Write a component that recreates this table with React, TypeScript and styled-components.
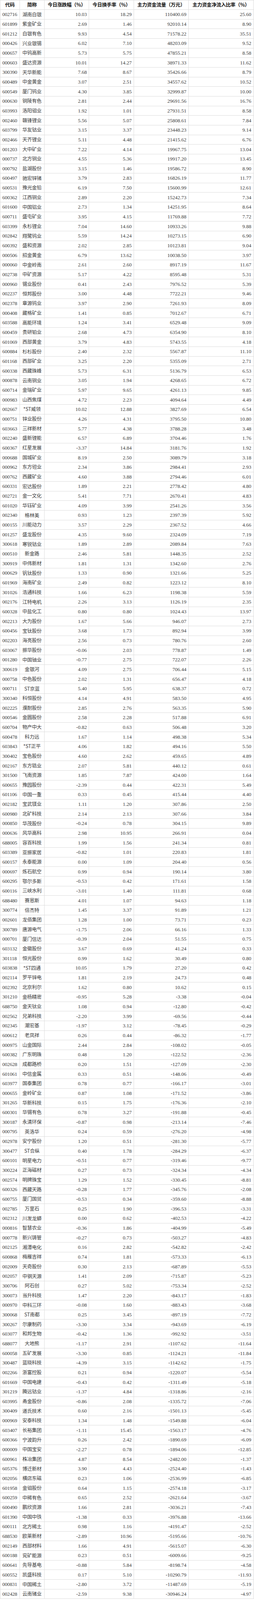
import React from 'react';
import styled, { createGlobalStyle } from 'styled-components';

const GlobalStyle = createGlobalStyle`
  html, body {
    margin: 0;
    padding: 0;
    background: #fff;
  }
`;

const RAW = `
002716 湖南白银 10.03 18.29 110400.69 25.60
601899 紫金矿业 2.69 1.46 92010.14 8.90
601212 白银有色 9.93 4.54 71578.22 35.51
000426 兴业银锡 6.02 7.10 48203.09 9.52
000657 中钨高新 5.73 5.75 47855.21 8.58
000603 盛达资源 10.01 14.27 38971.33 11.62
300390 天华新能 7.68 8.67 35426.66 8.79
600489 中金黄金 3.07 2.51 34557.62 10.52
600549 厦门钨业 4.30 3.85 32999.87 10.00
000630 铜陵有色 2.81 2.44 29691.56 16.76
603993 洛阳钼业 1.92 1.01 27931.51 8.58
002460 赣锋锂业 5.56 5.07 25808.61 7.84
603799 华友钴业 3.15 3.37 23448.23 9.14
002466 天齐锂业 5.11 4.48 21415.62 6.76
001203 大中矿业 7.22 4.14 19967.75 13.04
000737 北方铜业 4.55 5.36 19917.20 13.45
000792 盐湖股份 3.15 1.46 19586.72 8.90
600497 驰宏锌锗 3.79 2.83 16826.19 11.77
600531 豫光金铅 6.19 7.50 15600.99 12.61
600362 江西铜业 2.89 2.20 15242.73 7.34
601600 中国铝业 2.73 1.34 14251.95 8.64
600711 盛屯矿业 3.95 4.15 11769.88 7.72
603399 永杉锂业 7.04 14.60 10933.26 9.88
002842 翔鹭钨业 5.59 14.24 10273.15 6.90
600392 盛和资源 2.02 2.85 10123.81 9.04
000506 招金黄金 6.79 13.62 10038.50 3.97
000060 中金岭南 2.61 2.60 8917.19 11.67
002738 中矿资源 5.17 4.22 8595.48 5.31
000960 锡业股份 0.41 2.43 7976.52 5.39
002237 恒邦股份 3.00 4.48 7722.21 9.46
002378 章源钨业 3.97 2.90 7261.93 8.09
000408 藏格矿业 1.41 0.85 7012.67 6.71
603588 高能环境 1.24 3.41 6529.48 9.09
600459 贵研铂业 2.68 4.73 6354.90 8.10
601069 西部黄金 3.79 4.83 5743.55 4.18
600884 杉杉股份 2.40 2.32 5567.87 11.10
601168 西部矿业 3.25 2.20 5355.09 2.71
600338 西藏珠峰 5.73 6.31 5136.79 6.53
000878 云南铜业 3.05 1.94 4268.65 6.72
600714 金瑞矿业 5.97 9.65 4261.13 9.85
000983 山西焦煤 4.72 2.23 4094.64 4.49
002667 *ST威领 10.02 12.88 3827.69 6.54
000751 锌业股份 4.26 4.31 3795.50 10.80
603663 三祥新材 5.77 4.38 3788.28 3.48
002240 盛新锂能 6.57 6.89 3704.46 1.76
600367 红星发展 -3.37 14.84 3181.76 1.92
000688 国城矿业 8.19 2.50 3089.79 3.18
000962 东方钽业 2.34 3.86 2984.41 2.93
000762 西藏矿业 4.60 3.88 2794.46 6.01
600331 宏达股份 1.89 2.21 2778.42 4.80
002721 金一文化 5.41 7.71 2670.41 4.83
601020 华钰矿业 4.09 3.99 2541.26 3.56
002340 格林美 0.93 1.23 2397.39 5.92
000155 川能动力 3.57 2.29 2367.52 4.66
001257 盛龙股份 4.35 9.60 2324.09 7.19
300618 寒锐钴业 1.89 2.89 2089.84 7.63
000510 新金路 2.46 5.81 1448.35 2.52
300919 中伟新材 1.81 1.31 1342.60 2.76
000629 钒钛股份 1.33 0.90 1321.66 5.25
601969 海南矿业 2.49 0.82 1223.12 8.10
301026 浩通科技 1.66 6.23 1198.38 5.59
002176 江特电机 2.26 3.13 1126.19 2.35
600328 中盐化工 0.80 0.80 1024.43 13.97
002213 大为股份 1.67 5.66 946.07 2.73
600456 宝钛股份 3.68 1.73 892.94 3.99
002203 海亮股份 2.56 0.73 780.76 2.60
603067 振华股份 -0.06 2.03 778.87 1.49
001280 中国铀业 -0.77 2.75 722.07 2.26
300619 金银河 4.09 2.75 706.44 5.15
000758 中色股份 2.02 1.31 656.47 4.18
000711 ST京蓝 5.40 5.95 638.37 0.72
300340 科恒股份 4.14 4.91 583.50 4.95
002225 濮耐股份 2.85 2.76 563.35 5.90
000546 金圆股份 2.58 2.28 517.88 6.91
600704 物产中大 -0.82 0.63 506.48 3.20
600478 科力远 1.67 1.14 498.38 5.34
603843 *ST正平 4.06 1.82 494.16 5.50
300402 宝色股份 4.60 2.62 459.65 4.89
002167 东方锆业 2.07 5.81 440.12 0.61
301500 飞南资源 1.85 7.87 424.00 1.64
600655 豫园股份 -2.39 0.44 422.31 5.49
601106 中国一重 0.33 0.45 415.44 4.40
002182 宝武镁业 1.11 1.20 307.86 2.50
600980 北矿科技 2.14 2.13 307.66 3.84
000850 华茂股份 -0.24 0.78 304.15 9.89
000636 风华高科 2.98 10.95 266.91 0.04
688005 容百科技 1.99 1.56 241.34 0.81
603389 亚振家居 -0.82 1.01 220.83 1.81
600157 永泰能源 0.00 1.09 204.40 0.56
000697 炼石航空 0.99 0.94 190.14 3.80
600295 鄂尔多斯 -0.53 0.42 171.61 1.58
600116 三峡水利 -3.01 1.40 111.81 0.68
688480 赛恩斯 4.01 1.07 94.63 1.18
300774 倍杰特 1.45 3.37 91.89 1.21
002601 龙佰集团 1.28 1.00 73.71 0.23
300789 唐源电气 -1.75 2.06 66.16 1.33
000701 厦门信达 -0.39 2.04 51.55 0.75
603132 金徽股份 3.67 0.69 41.24 0.33
301118 恒光股份 0.99 1.62 30.49 0.80
603838 *ST四通 10.05 1.79 27.20 0.42
002114 罗平锌电 1.81 2.19 24.73 0.48
002392 北京利尔 1.62 0.80 10.62 0.15
301210 金杨精密 -0.95 5.28 -3.38 -0.04
688750 金天钛业 1.08 0.94 -12.80 -0.42
002562 兄弟科技 -2.20 3.99 -69.56 -0.44
002345 潮宏基 -1.97 3.12 -78.45 -0.29
600612 老凤祥 0.26 0.44 -86.32 -1.77
000975 山金国际 2.44 2.84 -108.02 -0.05
600382 广东明珠 0.48 1.20 -122.52 -2.36
002628 成都路桥 0.20 1.51 -127.09 -2.30
601061 中信金属 0.33 0.51 -148.06 -0.49
603977 国泰集团 0.78 0.77 -166.17 -3.01
000655 金岭矿业 0.87 1.08 -171.52 -3.86
301265 华新科技 0.15 1.75 -176.36 -2.10
600301 华锡有色 0.78 3.27 -191.88 -0.45
300187 永清环保 -0.87 0.98 -213.14 -7.46
000795 英洛华 0.24 0.59 -276.20 -4.98
002978 安宁股份 1.20 0.51 -281.30 -5.77
300477 ST合纵 0.40 1.78 -284.29 -6.37
600101 明星电力 -0.51 0.77 -319.46 -9.77
300224 正海磁材 0.27 0.73 -324.34 -4.34
002574 明牌珠宝 1.29 1.52 -330.45 -8.81
600326 西藏天路 -0.28 1.77 -345.76 -2.08
600755 厦门国贸 -0.53 0.34 -359.60 -8.88
002785 万里石 0.25 1.90 -396.53 -3.31
002312 川发龙蟒 0.00 0.62 -402.53 -4.22
000816 智慧农业 -0.36 1.86 -404.99 -5.49
000778 新兴铸管 -0.27 0.73 -503.27 -4.83
002125 湘潭电化 0.16 2.82 -542.82 -2.42
600868 梅雁吉祥 0.74 1.81 -573.33 -6.13
002009 天奇股份 0.30 2.13 -687.89 -5.53
002057 中钢天源 1.41 2.09 -715.87 -5.23
300706 阿石创 0.27 5.02 -753.34 -2.52
300073 当升科技 1.47 2.20 -843.17 -1.83
000970 中科三环 -0.08 1.60 -883.43 -3.68
300068 ST南都 0.25 3.45 -897.19 -7.72
300267 尔康制药 -3.30 3.34 -943.69 -6.19
603077 和邦生物 -0.42 1.36 -992.92 -3.51
688077 大地熊 -1.17 2.91 -1107.62 -11.64
600058 五矿发展 -3.30 0.85 -1124.21 -11.84
300487 蓝晓科技 -4.39 3.15 -1142.62 -1.75
002266 浙富控股 0.21 0.94 -1220.07 -5.54
601669 中国电建 -0.43 0.42 -1311.49 -5.18
301219 腾远钴业 -1.37 4.84 -1318.86 -2.16
603995 甬金股份 -0.86 2.08 -1335.72 -7.06
300409 道氏技术 0.60 2.16 -1501.13 -5.45
000969 安泰科技 1.34 1.48 -1549.88 -6.04
603407 长裕集团 -1.11 15.45 -1563.17 -4.76
600366 宁波韵升 0.26 2.42 -1890.69 -6.09
000009 中国宝安 -2.27 0.78 -1894.06 -12.85
600961 株冶集团 4.87 8.54 -2482.00 -1.37
605376 博迁新材 3.90 4.43 -2524.40 -1.43
002056 横店东磁 0.23 1.06 -2536.99 -6.85
601958 金钼股份 0.64 1.15 -2574.18 -3.17
600259 中稀有色 0.65 2.52 -2621.64 -3.67
600490 鹏欣资源 1.66 2.81 -3036.21 -7.43
601390 中国中铁 -1.38 0.33 -3976.88 -13.66
600111 北方稀土 0.98 1.16 -4191.47 -2.52
688530 欧莱新材 -2.89 10.96 -5195.66 -10.76
002149 西部材料 1.66 4.91 -5615.07 -6.30
600188 兖矿能源 0.23 0.51 -6009.66 -9.25
600641 先导基电 -0.88 5.84 -8198.74 -4.58
600552 凯盛科技 0.17 5.10 -10290.79 -11.93
000831 中国稀土 -2.80 3.72 -11487.69 -5.19
002428 云南锗业 -2.59 9.38 -30946.24 -4.97
`;

const ROWS = RAW.trim()
  .split('\n')
  .map((line) => line.trim().split(/\s+/));

const HEADERS = [
  '代码',
  '简称',
  '今日涨跌幅（%）',
  '今日换手率（%）',
  '主力资金流量（万元）',
  '主力资金净流入比率（%）',
];

// column widths follow the ruled lines of the source table
const COLUMNS = '49.6px 63.4px 114.2px 114.8px 140px 166px';
const BORDER = '#dcdcdc';
// the capture window stops at 4096px, so the 165 rows are sized to fit in it
const HEAD_H = 25;
const ROW_H = 24.66;

const Table = styled.div`
  width: 649px;
  border-left: 1px solid ${BORDER};
  font-family: 'Liberation Serif', 'Noto Sans CJK SC', serif;
`;

const HeaderRow = styled.div`
  display: grid;
  grid-template-columns: ${COLUMNS};
  grid-template-rows: 100%;
  height: ${HEAD_H}px;
  box-sizing: border-box;
  border-top: 1px solid ${BORDER};
  border-bottom: 1px solid ${BORDER};
  overflow: hidden;
`;

const HeaderCell = styled.div`
  display: flex;
  align-items: center;
  justify-content: center;
  min-height: 0;
  border-right: 1px solid ${BORDER};
  font-family: 'Noto Sans CJK SC', sans-serif;
  font-weight: 700;
  font-size: 12.5px;
  line-height: 1;
  letter-spacing: -0.3px;
  color: #111;
  white-space: nowrap;
  overflow: hidden;
`;

const Row = styled.div`
  display: grid;
  grid-template-columns: ${COLUMNS};
  grid-template-rows: 100%;
  height: ${ROW_H}px;
  box-sizing: border-box;
  border-bottom: 1px solid ${BORDER};
  overflow: hidden;
`;

const Cell = styled.div<{ $align: 'left' | 'center' | 'right' }>`
  display: flex;
  align-items: center;
  justify-content: ${(p) =>
    p.$align === 'left' ? 'flex-start' : p.$align === 'center' ? 'center' : 'flex-end'};
  min-height: 0;
  padding: 0 5px;
  border-right: 1px solid ${BORDER};
  font-size: 13px;
  line-height: 1;
  color: #3a3a3a;
  white-space: nowrap;
  overflow: hidden;
`;

const Code = styled(Cell)`
  padding-left: 5px;
  letter-spacing: -0.2px;
`;

const Name = styled(Cell)`
  padding: 0;
  font-family: 'Noto Sans CJK SC', sans-serif;
  font-size: 12.5px;
  letter-spacing: -0.2px;
`;

const App = () => (
  <>
    <GlobalStyle />
    <Table>
      <HeaderRow>
        {HEADERS.map((h) => (
          <HeaderCell key={h}>{h}</HeaderCell>
        ))}
      </HeaderRow>
      {ROWS.map(([code, name, change, turnover, flow, ratio]) => (
        <Row key={code}>
          <Code $align="left">{code}</Code>
          <Name $align="center">{name}</Name>
          <Cell $align="right">{change}</Cell>
          <Cell $align="right">{turnover}</Cell>
          <Cell $align="right">{flow}</Cell>
          <Cell $align="right">{ratio}</Cell>
        </Row>
      ))}
    </Table>
  </>
);

export default App;
